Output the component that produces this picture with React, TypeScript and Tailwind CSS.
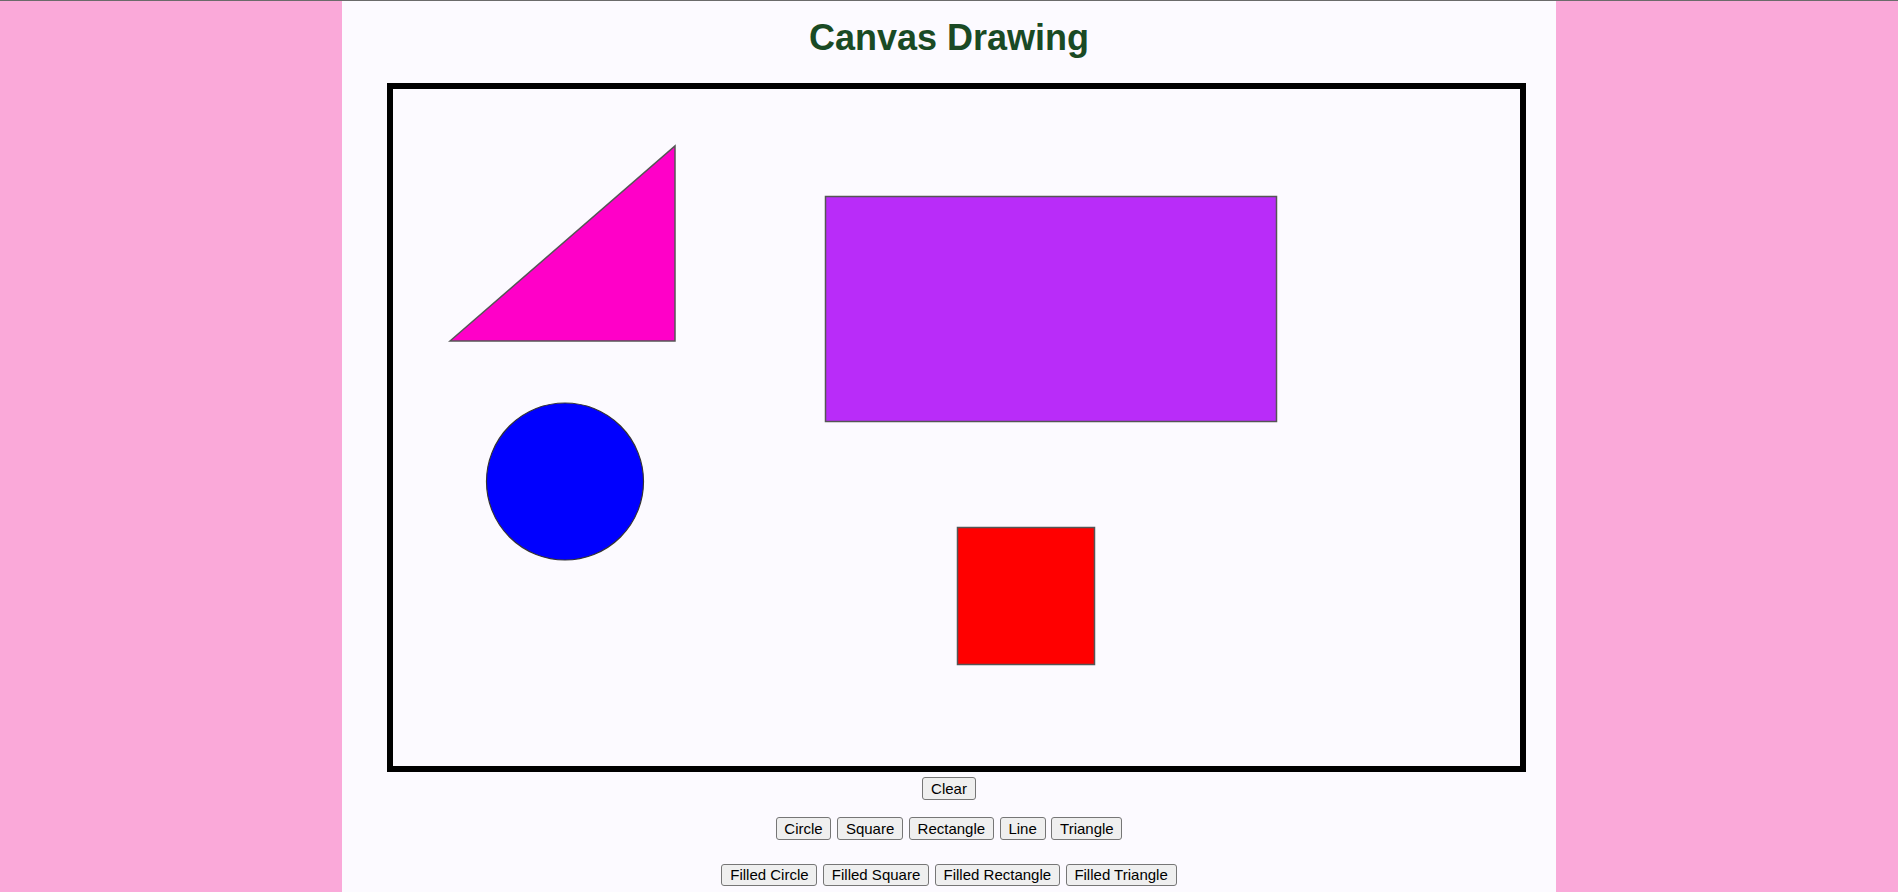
const font = { fontFamily: '"Liberation Sans", Arial, sans-serif' };

function Btn({ label }: { label: string }) {
  return (
    <button className="h-[22.5px] px-[7.8px] border border-[#767676] bg-[#efefef] rounded-[3px] text-[15px] leading-none text-black">
      {label}
    </button>
  );
}

export default function App() {
  return (
    <div
      className="min-h-screen bg-[#faa9d9] border-t border-[#6b6b6b]"
      style={font}
    >
      <div className="w-[64%] mx-auto min-h-[891px] bg-[#fcfaff] pt-[16px] flex flex-col">
        {/* Title */}
        <h1 className="text-center text-[36px] leading-[42px] font-bold text-[#1a4a24]">
          Canvas Drawing
        </h1>

        {/* Drawing surface */}
        <div className="mt-[24px] ml-[45px] w-[1139px] h-[689px] border-[6px] border-black">
          <svg width="1127" height="677" viewBox="0 0 1127 677">
            <polygon
              points="57,252 282,57 282,252"
              fill="#ff00c8"
              stroke="#555"
              strokeWidth="1.5"
            />
            <rect
              x="432.5"
              y="107.5"
              width="451"
              height="225"
              fill="#b92cf9"
              stroke="#555"
              strokeWidth="1.5"
            />
            <circle
              cx="172"
              cy="392.5"
              r="78.5"
              fill="#0000ff"
              stroke="#333"
              strokeWidth="1.2"
            />
            <rect
              x="564.5"
              y="438.5"
              width="137"
              height="137"
              fill="#ff0000"
              stroke="#555"
              strokeWidth="1.5"
            />
          </svg>
        </div>

        {/* Controls */}
        <div className="mt-[5px] flex justify-center">
          <Btn label="Clear" />
        </div>
        <div className="mt-[17.5px] flex justify-center gap-[5.7px]">
          <Btn label="Circle" />
          <Btn label="Square" />
          <Btn label="Rectangle" />
          <Btn label="Line" />
          <Btn label="Triangle" />
        </div>
        <div className="mt-[24px] flex justify-center gap-[5.7px]">
          <Btn label="Filled Circle" />
          <Btn label="Filled Square" />
          <Btn label="Filled Rectangle" />
          <Btn label="Filled Triangle" />
        </div>
      </div>
    </div>
  );
}
